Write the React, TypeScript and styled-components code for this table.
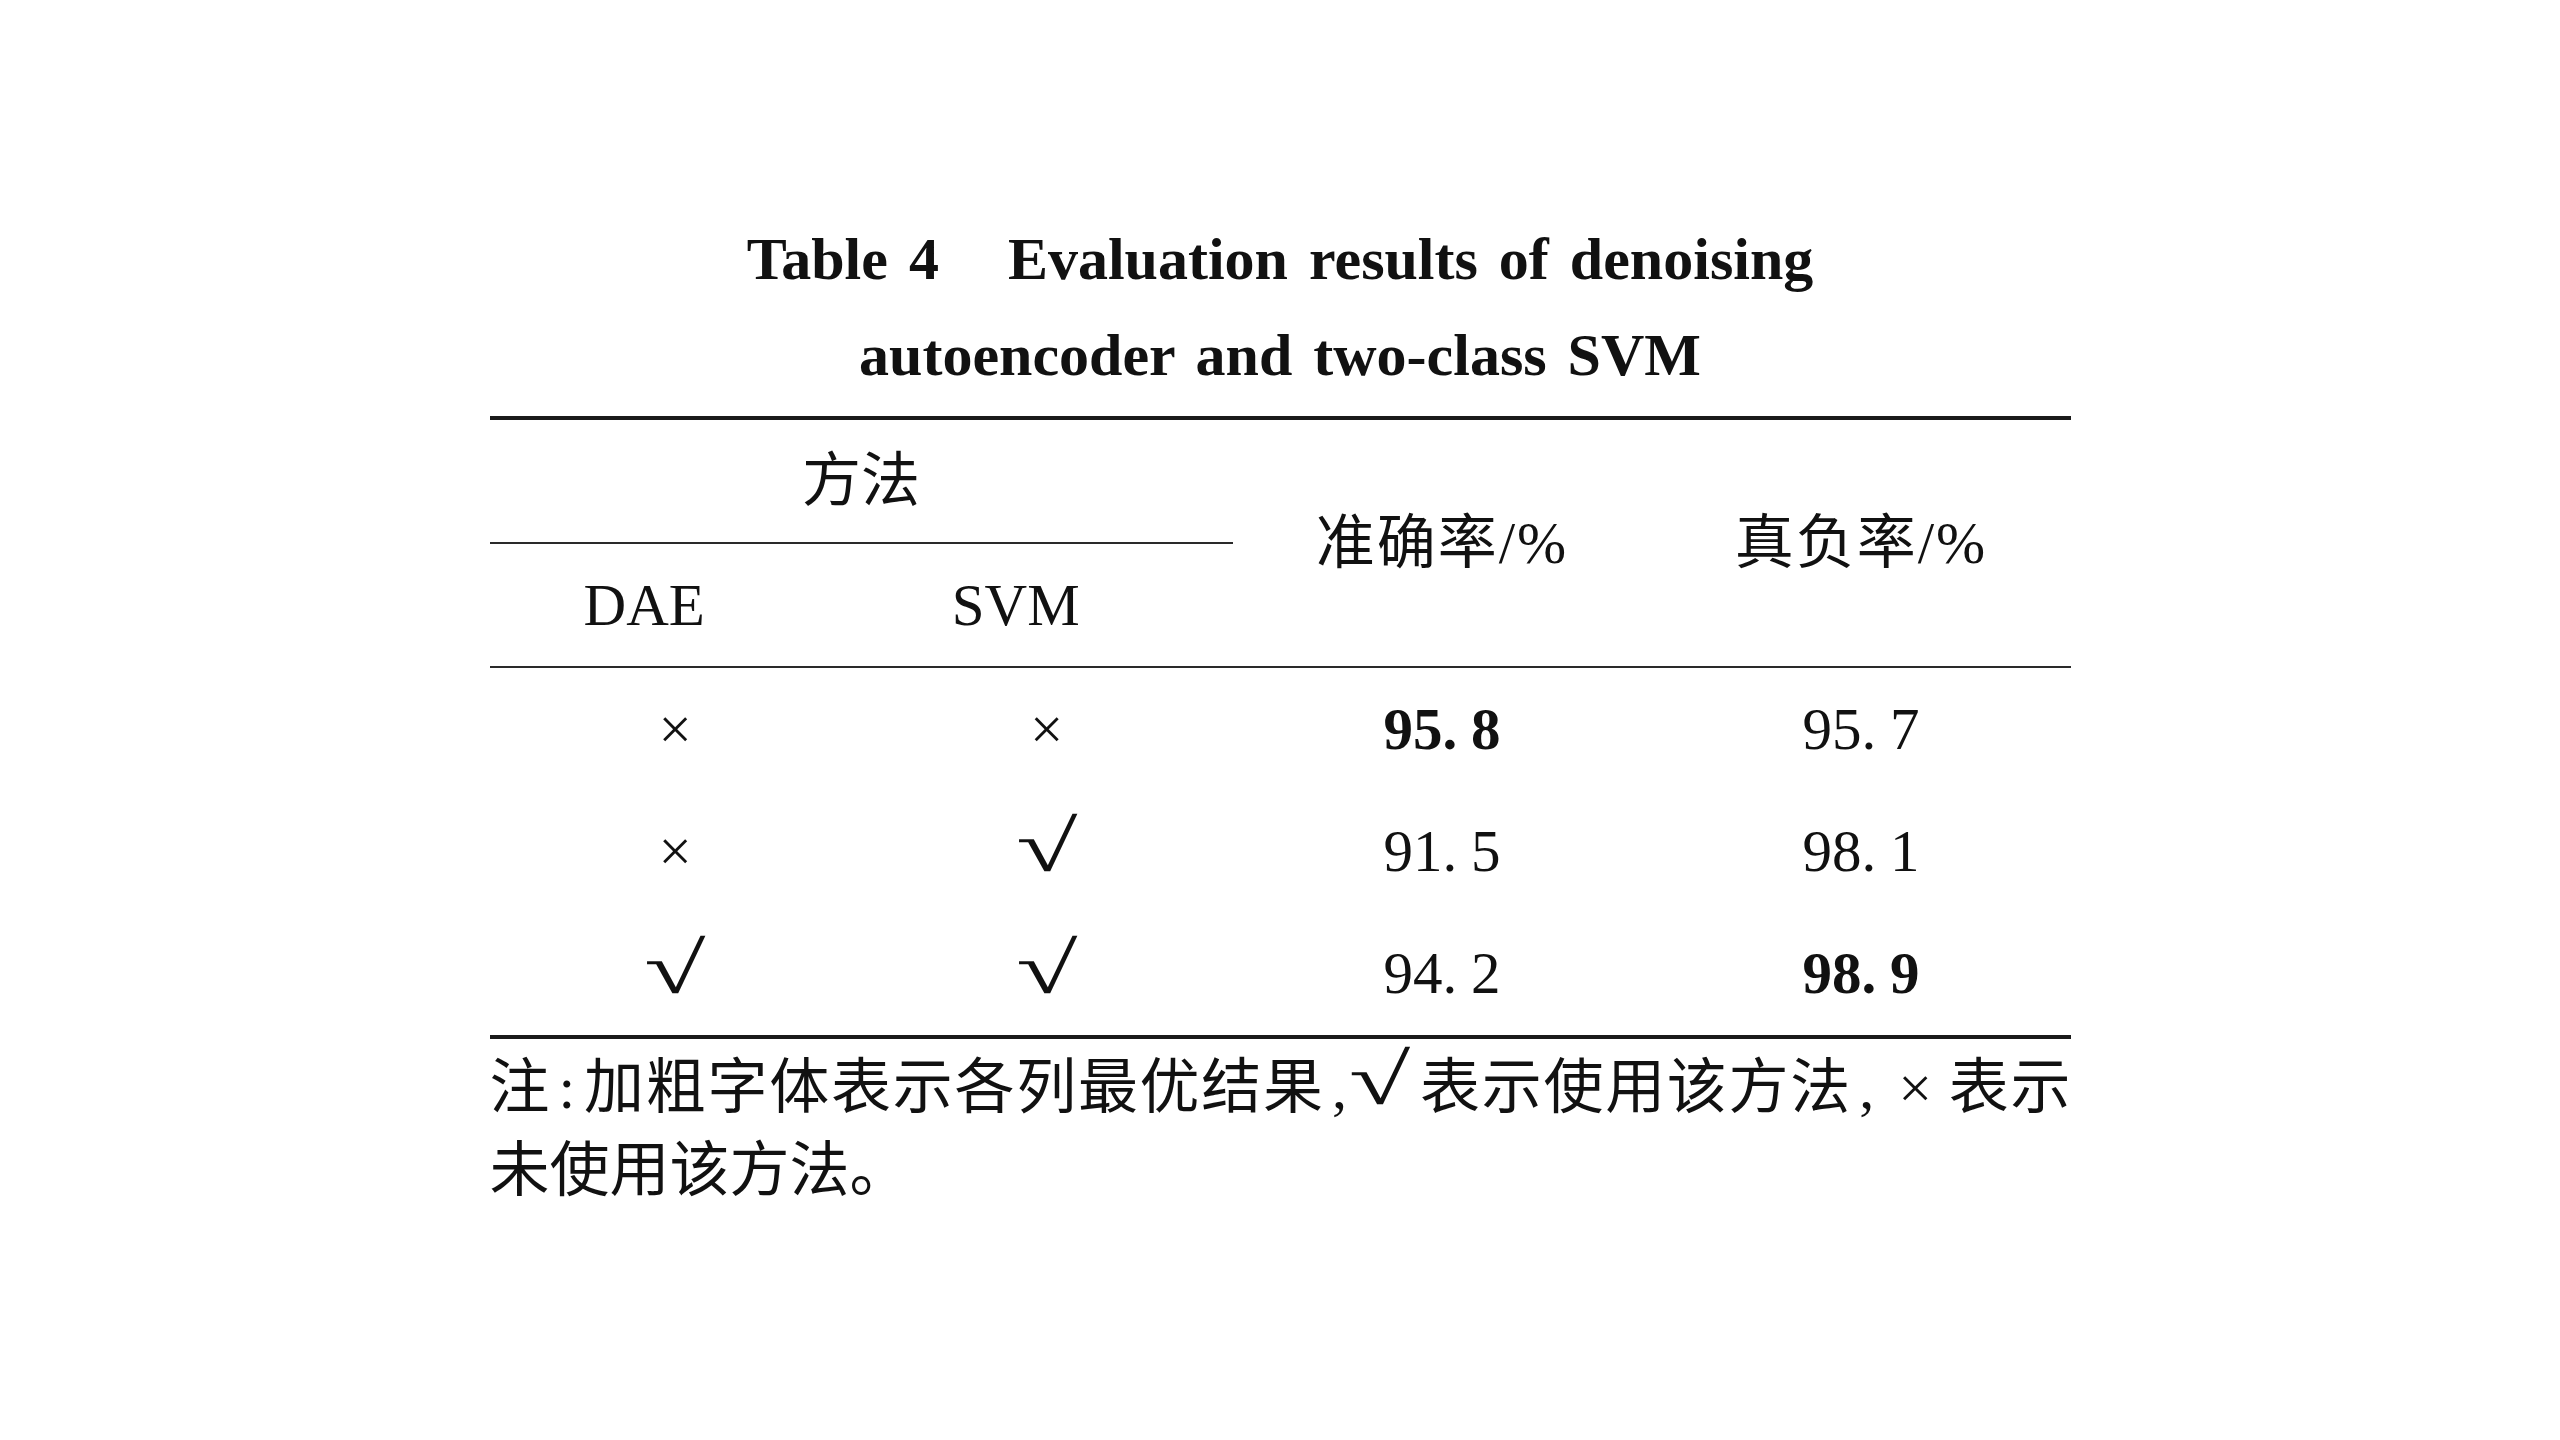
import React from 'react';
import styled, { createGlobalStyle } from 'styled-components';

const GlobalStyle = createGlobalStyle`
  html, body {
    margin: 0;
    padding: 0;
    background: #ffffff;
  }
  body {
    font-family: 'Liberation Serif', 'Noto Sans CJK SC', serif;
    color: #111111;
  }
`;

const Page = styled.div`
  width: 2560px;
  height: 1440px;
  padding-top: 211px;
  box-sizing: border-box;
  background: #ffffff;
`;

const Figure = styled.div`
  width: 1581px;
  margin: 0 auto;
`;

const Caption = styled.div`
  font-family: 'Liberation Serif', 'Noto Sans CJK SC', serif;
  font-weight: 700;
  font-size: 60px;
  line-height: 96px;
  word-spacing: 6px;
  text-align: center;
  margin-bottom: 13px;
`;

const CaptionGap = styled.span`
  display: inline-block;
  width: 69px;
`;

const Grid = styled.div`
  display: grid;
  grid-template-columns: 371.5px 371.5px 419px 419px;
  border-top: 4px solid #1a1a1a;
  border-bottom: 4px solid #1a1a1a;
  font-size: 59px;
`;

const Cell = styled.div<{ $bold?: boolean }>`
  display: flex;
  align-items: center;
  justify-content: center;
  height: 122.3px;
  line-height: 1;
  font-weight: ${(p) => (p.$bold ? 700 : 400)};
`;

const GroupHead = styled(Cell)`
  grid-column: 1 / 3;
  height: 122px;
  border-bottom: 2px solid #2a2a2a;
`;

const SubHead = styled(Cell)`
  height: 122px;
  padding-right: 62px;
  box-sizing: content-box;
  border-bottom: 2px solid #2a2a2a;
`;

const MetricHead = styled(Cell)<{ $col: number }>`
  grid-column: ${(p) => p.$col};
  grid-row: 1 / 3;
  height: auto;
  letter-spacing: 2px;
  border-bottom: 2px solid #2a2a2a;
`;

// the radical glyph is drawn wide, like the Song-style √ in the source
const Radical = styled.span`
  display: inline-block;
  width: 62px;
  text-align: center;
  font-family: 'Liberation Serif', serif;
  font-weight: 400;
  font-size: 72px;
  line-height: 0.8;
  transform: translateY(-4px) scaleX(1.55);
`;

const NoteRadical = styled(Radical)`
  margin-left: 12px;
  margin-right: -10px;
`;

const Cross = styled.span`
  font-family: 'Liberation Serif', serif;
  font-size: 59px;
`;

const Dot = styled.span`
  padding-right: 0.23em;
`;

const Note = styled.div`
  padding-top: 8px;
  font-family: 'Liberation Serif', 'Noto Sans CJK SC', serif;
  font-size: 60px;
  line-height: 83px;
`;

const NoteLine = styled.div<{ $full?: boolean }>`
  height: 83px;
  text-align: ${(p) => (p.$full ? 'justify' : 'left')};
  text-align-last: ${(p) => (p.$full ? 'justify' : 'left')};
  white-space: nowrap;
`;

const Punct = styled.span`
  margin: 0 0.12em;
`;

type Row = { dae: boolean; svm: boolean; acc: string; tnr: string; bestAcc?: boolean; bestTnr?: boolean };

const rows: Row[] = [
  { dae: false, svm: false, acc: '95.8', tnr: '95.7', bestAcc: true },
  { dae: false, svm: true, acc: '91.5', tnr: '98.1' },
  { dae: true, svm: true, acc: '94.2', tnr: '98.9', bestTnr: true },
];

const Num = ({ value }: { value: string }) => {
  const [a, b] = value.split('.');
  return (
    <span>
      {a}
      <Dot>.</Dot>
      {b}
    </span>
  );
};

const Used = ({ on }: { on: boolean }) => (on ? <Radical>√</Radical> : <Cross>×</Cross>);

export default function App() {
  return (
    <Page>
      <GlobalStyle />
      <Figure>
        <Caption>
          Table 4<CaptionGap />Evaluation results of denoising
          <br />
          autoencoder and two-class SVM
        </Caption>
        <Grid>
          <GroupHead>方法</GroupHead>
          <MetricHead $col={3}>准确率/%</MetricHead>
          <MetricHead $col={4}>真负率/%</MetricHead>
          <SubHead>DAE</SubHead>
          <SubHead>SVM</SubHead>
          {rows.map((r, i) => (
            <React.Fragment key={i}>
              <Cell>
                <Used on={r.dae} />
              </Cell>
              <Cell>
                <Used on={r.svm} />
              </Cell>
              <Cell $bold={r.bestAcc}>
                <Num value={r.acc} />
              </Cell>
              <Cell $bold={r.bestTnr}>
                <Num value={r.tnr} />
              </Cell>
            </React.Fragment>
          ))}
        </Grid>
        <Note>
          <NoteLine $full>
            注<Punct>:</Punct>加粗字体表示各列最优结果<Punct>,</Punct>
            <NoteRadical>√</NoteRadical>表示使用该方法<Punct>,</Punct> × 表示
          </NoteLine>
          <NoteLine>未使用该方法。</NoteLine>
        </Note>
      </Figure>
    </Page>
  );
}
